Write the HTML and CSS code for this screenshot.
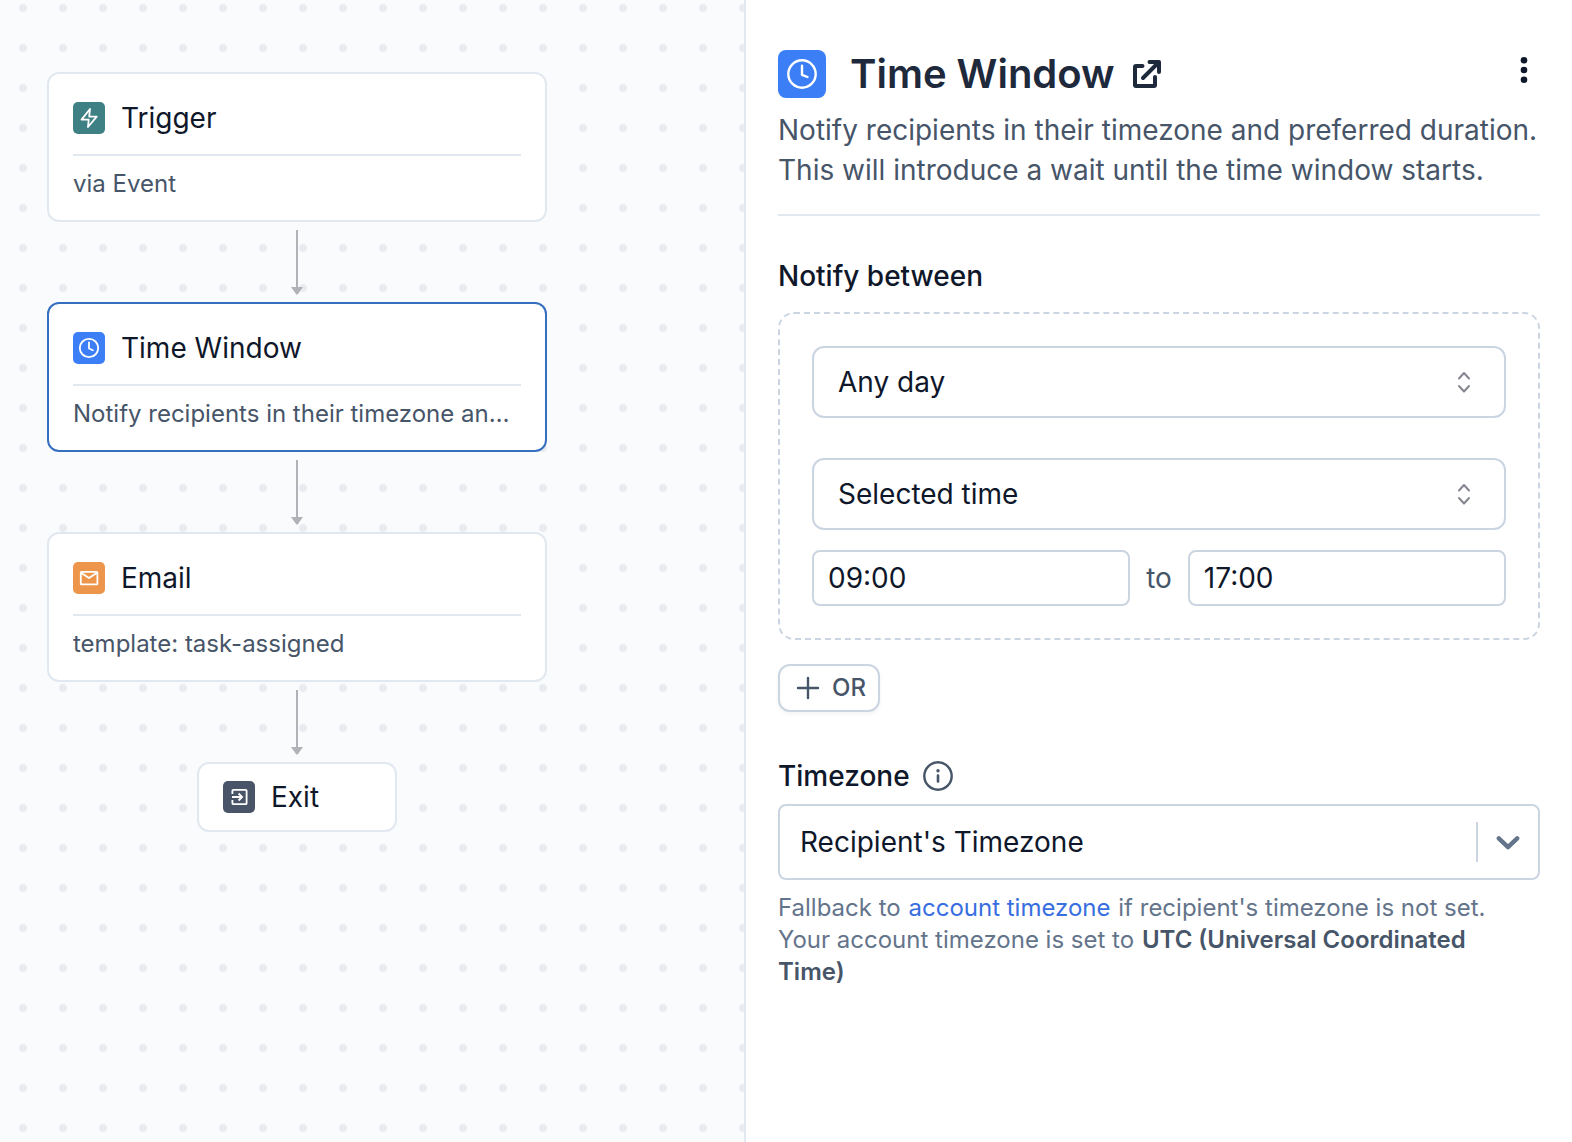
FILE: index.html
```html
<!DOCTYPE html>
<html lang="en">
<head>
<meta charset="utf-8">
<meta name="viewport" content="width=device-width, initial-scale=1">
<title>Time Window</title>
<link rel="stylesheet" href="styles.css">
</head>
<body>
<div class="layout">
  <main class="canvas">
    <div class="flow">
      <article class="node">
        <div class="node-head">
          <span class="badge badge-trigger">
            <svg width="32" height="32" viewBox="0 0 32 32" fill="none" stroke="currentColor" stroke-width="1.8" stroke-linejoin="round" stroke-linecap="round"><path d="M17 7 8.5 17.6h7.2L15 25l8.7-10.4h-7.5z"/></svg>
          </span>
          <h2 class="node-title">Trigger</h2>
        </div>
        <p class="node-text">via Event</p>
      </article>
      <svg class="edge" width="12" height="66" viewBox="0 0 12 66"><path d="M5 0h2v57h5l-5 7q-1 1-2 0L0 57h5z"/></svg>
      <article class="node node-selected">
        <div class="node-head">
          <span class="badge badge-time">
            <svg width="32" height="32" viewBox="0 0 32 32" fill="none" stroke="currentColor" stroke-width="1.8" stroke-linejoin="round" stroke-linecap="round"><circle cx="16" cy="16" r="9.2"/><path d="M16 10.5v6l3.8 1.8"/></svg>
          </span>
          <h2 class="node-title">Time Window</h2>
        </div>
        <p class="node-text">Notify recipients in their timezone and preferred duration.</p>
      </article>
      <svg class="edge" width="12" height="66" viewBox="0 0 12 66"><path d="M5 0h2v57h5l-5 7q-1 1-2 0L0 57h5z"/></svg>
      <article class="node">
        <div class="node-head">
          <span class="badge badge-email">
            <svg width="32" height="32" viewBox="0 0 32 32" fill="none" stroke="currentColor" stroke-width="1.8" stroke-linejoin="round"><rect x="7.8" y="9.8" width="16.6" height="12.6" rx="0.6"/><path d="m8 10.8 8 5.2 8-5.2"/></svg>
          </span>
          <h2 class="node-title">Email</h2>
        </div>
        <p class="node-text">template: task-assigned</p>
      </article>
      <svg class="edge" width="12" height="66" viewBox="0 0 12 66"><path d="M5 0h2v57h5l-5 7q-1 1-2 0L0 57h5z"/></svg>
      <article class="node-exit">
        <span class="badge badge-exit">
          <svg width="32" height="32" viewBox="0 0 32 32" fill="none" stroke="currentColor" stroke-width="1.8"><path d="M9.4 13V9.8q0-1 1-1h12.2q1 0 1 1v12.400q0 1-1 1H10.400q-1 0-1-1V19M9 16h9.500M15.600 12.500l3.500 3.500-3.500 3.500"/></svg>
        </span>
        <h2 class="node-title">Exit</h2>
      </article>
    </div>
  </main>

  <aside class="panel">
    <header class="panel-header">
      <div class="panel-top">
        <span class="badge-large">
          <svg width="48" height="48" viewBox="0 0 48 48" fill="none" stroke="currentColor" stroke-width="2.4" stroke-linecap="round" stroke-linejoin="round"><circle cx="24" cy="24" r="13.700"/><path d="M24 15.800v9l5.500 2.200"/></svg>
        </span>
        <h1 class="panel-title">Time Window</h1>
        <a class="open-link" href="#" aria-label="Open documentation">
          <svg width="32" height="32" viewBox="0 0 32 32" fill="none" stroke="currentColor" stroke-width="4" stroke-linecap="round" stroke-linejoin="round"><path d="M11.500 8H5q-1 0-1 1v18q0 1 1 1h18q1 0 1-1v-8M18.500 4H28v10M12 20 27.500 4.500"/></svg>
        </a>
        <button class="menu-button" type="button" aria-label="More options">
          <svg width="8" height="28" viewBox="0 0 8 28" fill="currentColor"><circle cx="4" cy="4.300" r="3.300"/><circle cx="4" cy="14" r="3.300"/><circle cx="4" cy="23.700" r="3.300"/></svg>
        </button>
      </div>
      <p class="panel-text">Notify recipients in their timezone and preferred duration. This will introduce a wait until the time window starts.</p>
    </header>

    <form class="form">
      <h3 class="label">Notify between</h3>
      <div class="rule">
        <div class="select-wrap">
          <select class="select" aria-label="Days"><option>Any day</option></select>
          <svg class="select-icon" width="40" height="40" viewBox="0 0 40 40" fill="none" stroke="currentColor" stroke-width="2" stroke-linecap="round" stroke-linejoin="round"><path d="m15 16.500 5-5.500 5 5.500M15 24l5 5.500 5-5.500"/></svg>
        </div>
        <div class="time-group">
          <div class="select-wrap">
            <select class="select" aria-label="Time"><option>Selected time</option></select>
            <svg class="select-icon" width="40" height="40" viewBox="0 0 40 40" fill="none" stroke="currentColor" stroke-width="2" stroke-linecap="round" stroke-linejoin="round"><path d="m15 16.500 5-5.500 5 5.500M15 24l5 5.500 5-5.500"/></svg>
          </div>
          <div class="time-range">
            <input class="time-input" type="text" value="09:00" aria-label="Start time">
            <span>to</span>
            <input class="time-input" type="text" value="17:00" aria-label="End time">
          </div>
        </div>
      </div>
      <button class="or-button" type="button">
        <svg width="24" height="24" viewBox="0 0 24 24" fill="none" stroke="currentColor" stroke-width="2.400" stroke-linecap="round"><path d="M12 2v20M2 12h20"/></svg>
        OR
      </button>

      <div class="label-row">
        <label class="label" for="timezone">Timezone</label>
        <svg class="info" width="32" height="32" viewBox="0 0 32 32" fill="none" stroke="currentColor" stroke-width="2.400" stroke-linecap="round"><circle cx="16" cy="16" r="13.700"/><path d="M16 15.500v6" stroke-width="2.600"/><circle cx="16" cy="10.800" r="1.700" fill="currentColor" stroke="none"/></svg>
      </div>
      <div class="select-wrap">
        <select class="select select-zone" id="timezone"><option>Recipient's Timezone</option></select>
        <span class="zone-icon">
          <svg width="24" height="16" viewBox="0 0 24 16" fill="none" stroke="currentColor" stroke-width="4.400" stroke-linecap="round" stroke-linejoin="round"><path d="m2.800 4.300 9.200 8.900 9.200-8.900"/></svg>
        </span>
      </div>
      <p class="help">Fallback to <a class="help-link" href="#">account timezone</a> if recipient's timezone is not set. Your account timezone is set to <strong class="help-strong">UTC (Universal Coordinated Time)</strong></p>
    </form>
  </aside>
</div>
</body>
</html>
```
FILE: styles.css
```css
* {
  box-sizing: border-box;
}

body {
  margin: 0;
  background: #fff;
  color: #0f172a;
  font-family: Inter, "Liberation Sans", sans-serif;
  font-size: 28px;
  line-height: 40px;
}

h1, h2, h3, p {
  margin: 0;
}

svg {
  display: block;
  flex: none;
}

button, input, select {
  margin: 0;
  background: #fff;
  color: inherit;
  font: inherit;
}

.layout {
  display: grid;
  grid-template-columns: minmax(0, 744fr) minmax(0, 828fr);
  min-height: 100vh;
}

/* Workflow canvas */
.canvas {
  padding: 72px 47px;
  background-color: #fafbfd;
  background-image: radial-gradient(circle, #eaecf1 88%, #eaecf100 100%);
  background-image: radial-gradient(circle, #e9ebf0 0 3px, #eaecf1 4px, #eaecf100 4px);
  background-size: 40px 40px;
  background-position: 3px -12px;
}

.flow {
  display: flex;
  flex-direction: column;
  align-items: center;
  max-width: 500px;
}

.node,
.node-exit {
  background: #fff;
  border: 2px solid #e2e8f0;
  border-radius: 12px;
}

.node {
  width: 100%;
  height: 150px;
  padding: 24px;
}

.node-selected {
  border-color: #366fc0;
}

.node-head {
  display: flex;
  align-items: center;
  gap: 16px;
  padding-bottom: 16px;
  border-bottom: 2px solid #e2e8f0;
}

.node-exit {
  display: flex;
  align-items: center;
  gap: 16px;
  width: 200px;
  height: 70px;
  padding: 0 24px;
}

.node-title {
  font-size: 28px;
  font-weight: 400;
}

.node-text {
  padding-top: 12px;
  overflow: hidden;
  color: #475569;
  font-size: 24px;
  line-height: 32px;
  text-overflow: ellipsis;
  white-space: nowrap;
}

.badge {
  flex: none;
  border-radius: 5px;
  color: #fff;
}

.badge-trigger {
  background: #3f8084;
}

.badge-time {
  background: #3b7ef6;
}

.badge-email {
  background: #ec954b;
}

.badge-exit {
  background: #4a5468;
}

.edge {
  margin: 8px 0 6px;
  fill: #b1b1b7;
}

/* Settings panel */
.panel {
  padding: 50px 32px;
  border-left: 2px solid #e2e8f0;
}

.panel-header {
  padding-bottom: 24px;
  border-bottom: 2px solid #e2e8f0;
}

.panel-top {
  display: flex;
  align-items: center;
  margin-bottom: 12px;
}

.badge-large {
  flex: none;
  border-radius: 8px;
  background: #3b7ef6;
  color: #fff;
}

.panel-title {
  margin: 0 16px 0 24px;
  color: #1e293b;
  font-size: 40px;
  font-weight: 600;
  line-height: 48px;
}

.open-link {
  color: #1e293b;
}

.menu-button {
  display: flex;
  align-items: center;
  justify-content: center;
  align-self: flex-start;
  width: 32px;
  height: 40px;
  margin-left: auto;
  padding: 0;
  border: 0;
}

.panel-text {
  color: #475569;
}

.form {
  display: flex;
  flex-direction: column;
  padding-top: 40px;
}

.label {
  font-size: 28px;
  font-weight: 500;
}

.rule {
  display: flex;
  flex-direction: column;
  gap: 40px;
  margin: 16px 0 24px;
  padding: 32px;
  border: 2px dashed #cbd5e1;
  border-radius: 16px;
}

.select-wrap {
  display: grid;
  grid-template-columns: minmax(0, 1fr);
  align-items: center;
}

.select-wrap > * {
  grid-area: 1 / 1;
}

.select {
  appearance: none;
  width: 100%;
  height: 72px;
  padding: 0 24px;
  border: 2px solid #cbd5e1;
  border-radius: 12px;
}

.select-icon {
  justify-self: end;
  margin-right: 22px;
  color: #85878f;
  pointer-events: none;
}

.time-group {
  display: flex;
  flex-direction: column;
  gap: 20px;
}

.time-range {
  display: flex;
  align-items: center;
  gap: 16px;
  color: #475569;
}

.time-input {
  flex: 1;
  width: 0;
  height: 56px;
  padding: 0 14px;
  border: 2px solid #cbd5e1;
  border-radius: 8px;
  color: #0f172a;
}

.or-button {
  display: flex;
  align-items: center;
  align-self: flex-start;
  gap: 12px;
  height: 48px;
  padding: 0 12px 0 16px;
  border: 2px solid #cbd5e1;
  border-radius: 12px;
  box-shadow: 0 2px 4px #0000000d;
  color: #475569;
  font-size: 24px;
  font-weight: 500;
}

.label-row {
  display: flex;
  align-items: center;
  gap: 12px;
  margin: 44px 0 8px;
}

.info {
  color: #475569;
}

.select-zone {
  height: 76px;
  padding: 0 20px;
  border-radius: 8px;
}

.zone-icon {
  display: flex;
  align-items: center;
  justify-self: end;
  height: 40px;
  margin-right: 20px;
  padding-left: 18px;
  border-left: 2px solid #cbd5e1;
  color: #64748b;
  pointer-events: none;
}

.help {
  margin-top: 12px;
  padding-right: 16px;
  color: #64748b;
  font-size: 24px;
  line-height: 32px;
}

.help-link {
  padding: 0 1px;
  color: #386ee0;
  text-decoration: none;
}

.help-strong {
  padding-left: 1px;
  color: #475569;
  font-weight: 600;
}
```
